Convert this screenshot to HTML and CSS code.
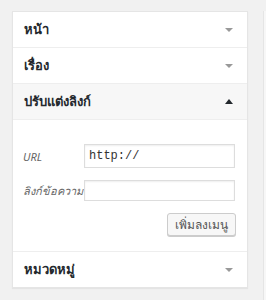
FILE: index.html
```html
<!DOCTYPE html>
<html lang="th">
<head>
  <meta charset="UTF-8">
  <meta name="viewport" content="width=device-width,initial-scale=1.0">
  <title>เมนู</title>
  <link rel="stylesheet" href="styles.css">
</head>
<body>

<div class="columns">
  <div class="accordion">
    <div class="section">
      <h3 class="section-title">หน้า<span class="arrow arrow-down"></span></h3>
    </div>
    <div class="section">
      <h3 class="section-title">เรื่อง<span class="arrow arrow-down"></span></h3>
    </div>
    <div class="section open">
      <h3 class="section-title">ปรับแต่งลิงก์<span class="arrow arrow-up"></span></h3>
      <div class="section-content">
        <div class="field">
          <label class="field-label">URL</label>
          <input class="field-input url-input" type="text" value="http://">
        </div>
        <div class="field">
          <label class="field-label">ลิงก์ข้อความ</label>
          <input class="field-input" type="text">
        </div>
        <div class="actions">
          <button class="btn">เพิ่มลงเมนู</button>
        </div>
      </div>
    </div>
    <div class="section">
      <h3 class="section-title">หมวดหมู่<span class="arrow arrow-down"></span></h3>
    </div>
  </div>
  <div class="side-panel"></div>
</div>

</body>
</html>
```

FILE: styles.css
```css
body {
  margin: 0;
  padding: 11px 0 0 12px;
  background: #f1f1f1;
  font-family: "Noto Sans", "Liberation Sans", sans-serif;
  color: #23282d;
  overflow: hidden;
}
.columns {
  display: flex;
  gap: 15px;
  align-items: flex-start;
}
.accordion {
  width: 234px;
  flex-shrink: 0;
  background: #fff;
  border: 1px solid #e5e5e5;
  box-shadow: 0 1px 1px rgba(0,0,0,0.05);
}
.side-panel {
  flex: 1;
  min-width: 0;
  height: 300px;
  background: #f7f7f7;
  border-left: 1px solid #e5e5e5;
}
.section {
  border-bottom: 1px solid #eee;
}
.section:last-child {
  border-bottom: none;
}
.section-title {
  margin: 0;
  height: 35px;
  padding: 0 14px 0 11px;
  display: flex;
  align-items: center;
  justify-content: space-between;
  font-size: 13px;
  font-weight: bold;
}
.open .section-title {
  background: #f7f7f7;
  border-bottom: 1px solid #eee;
}
.arrow {
  width: 0;
  height: 0;
  border-left: 4px solid transparent;
  border-right: 4px solid transparent;
}
.arrow-down {
  border-top: 4px solid #999;
}
.arrow-up {
  border-bottom: 5px solid #23282d;
}
.section-content {
  padding: 24px 11px 15px 10px;
}
.field {
  display: flex;
  align-items: center;
  height: 21px;
  margin-bottom: 12px;
}
.field-label {
  width: 61px;
  flex-shrink: 0;
  white-space: nowrap;
  font-size: 11px;
  font-style: italic;
  color: #666;
}
.field-input {
  width: 151px;
  height: 21px;
  box-sizing: border-box;
  margin: 0;
  padding: 2px 4px;
  border: 1px solid #ddd;
  box-shadow: inset 0 1px 2px rgba(0,0,0,0.07);
  font-family: "Liberation Mono", monospace;
  font-size: 12px;
  color: #333;
}
.field:first-child {
  height: 24px;
}
.url-input {
  height: 24px;
}
.actions {
  display: flex;
  justify-content: flex-end;
}
.btn {
  height: 23px;
  padding: 0 7px;
  background: #f7f7f7;
  border: 1px solid #ccc;
  border-radius: 3px;
  box-shadow: 0 1px 0 #ccc;
  font-family: "Noto Sans", "Liberation Sans", sans-serif;
  font-size: 12px;
  color: #555;
}
```
